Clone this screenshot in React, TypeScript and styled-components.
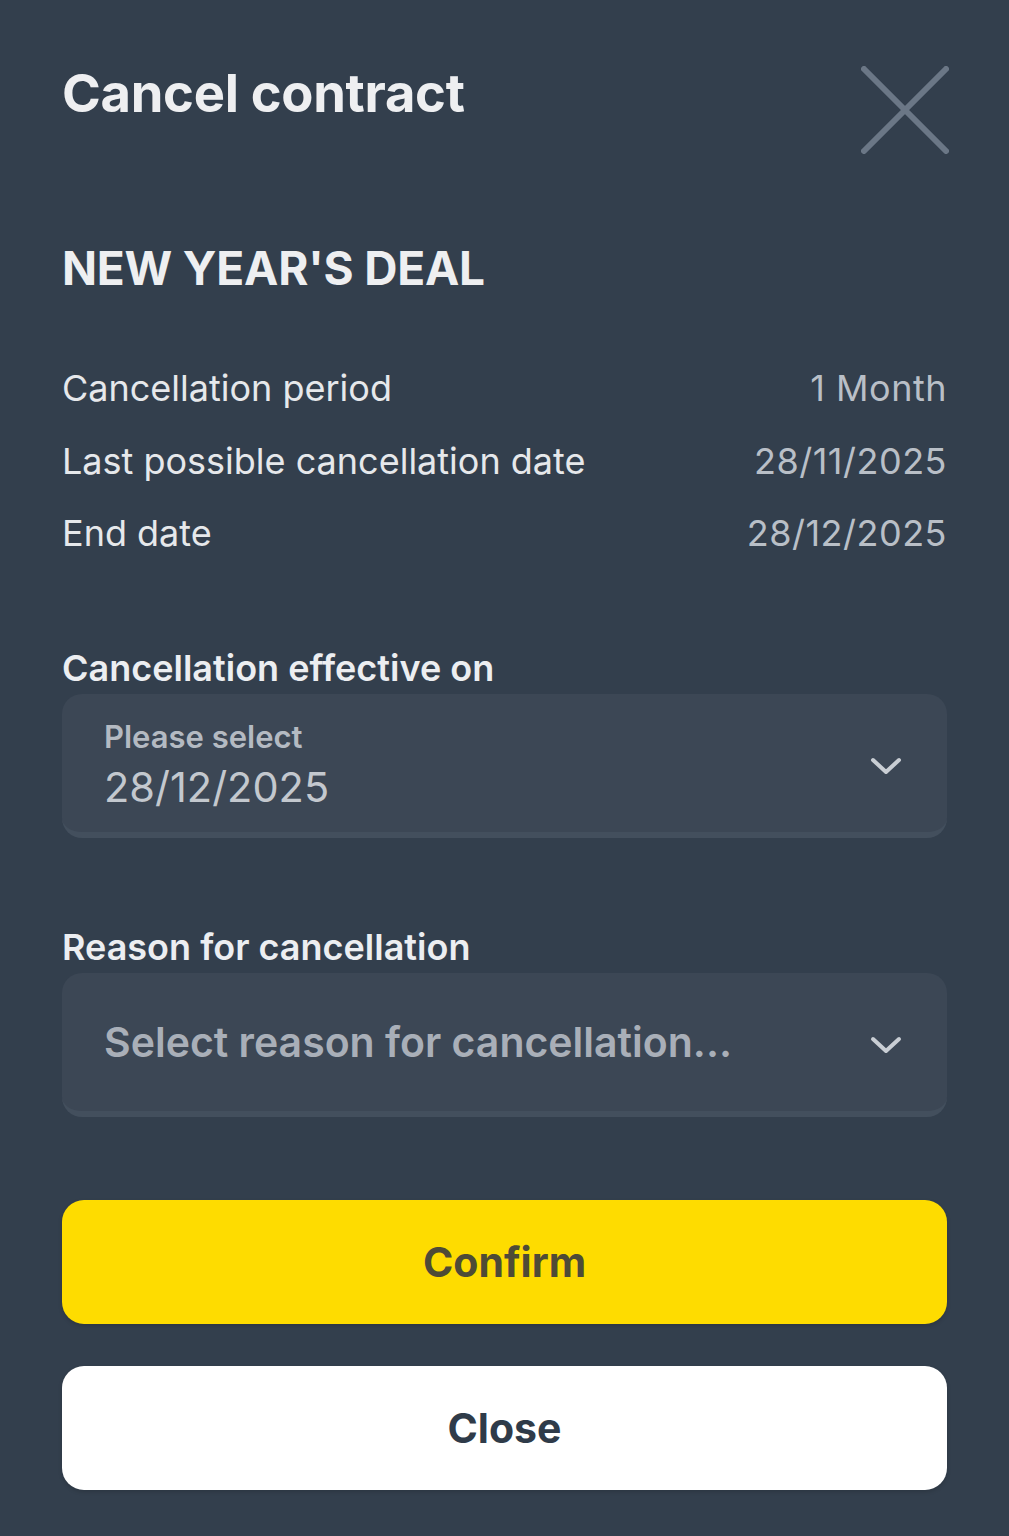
import styled, { createGlobalStyle } from "styled-components";

const GlobalStyle = createGlobalStyle`
  html, body {
    margin: 0;
    padding: 0;
    background: #333f4d;
  }
  body {
    font-family: Inter, "Noto Sans", sans-serif;
    -webkit-font-smoothing: antialiased;
  }
`;

const details = [
  { label: "Cancellation period", value: "1 Month" },
  { label: "Last possible cancellation date", value: "28/11/2025" },
  { label: "End date", value: "28/12/2025" },
];

const ChevronDown = () => (
  <Chevron width="34" height="22" viewBox="0 0 34 22" fill="none">
    <path
      d="M4 5l13 12L30 5"
      stroke="#c9ced4"
      strokeWidth="4"
      strokeLinecap="round"
      strokeLinejoin="round"
    />
  </Chevron>
);

const App = () => {
  return (
    <>
      <GlobalStyle />
      <Page>
        <Header>
          <Title>Cancel contract</Title>
          <CloseIcon aria-label="Close">
            <svg width="88" height="88" viewBox="0 0 88 88" fill="none">
              <path
                d="M3 3l82 82M85 3L3 85"
                stroke="#6b7786"
                strokeWidth="6"
                strokeLinecap="round"
              />
            </svg>
          </CloseIcon>
        </Header>

        <DealName>NEW YEAR'S DEAL</DealName>

        <DetailList>
          {details.map((d) => (
            <DetailRow key={d.label}>
              <DetailLabel>{d.label}</DetailLabel>
              <DetailValue>{d.value}</DetailValue>
            </DetailRow>
          ))}
        </DetailList>

        <FieldGroup $top={78}>
          <FieldLabel>Cancellation effective on</FieldLabel>
          <SelectBox>
            <SelectText>
              <SmallLabel>Please select</SmallLabel>
              <SelectedValue>28/12/2025</SelectedValue>
            </SelectText>
            <ChevronDown />
          </SelectBox>
        </FieldGroup>

        <FieldGroup $top={89}>
          <FieldLabel>Reason for cancellation</FieldLabel>
          <SelectBox>
            <Placeholder>Select reason for cancellation...</Placeholder>
            <ChevronDown />
          </SelectBox>
        </FieldGroup>

        <Actions>
          <Button $variant="primary">Confirm</Button>
          <Button $variant="secondary">Close</Button>
        </Actions>
      </Page>
    </>
  );
};

export default App;

const Page = styled.div`
  width: 1009px;
  min-height: 1536px;
  box-sizing: border-box;
  padding: 62px 62px 0 62px;
  background: #333f4d;
  color: #ebedf0;
`;

const Header = styled.div`
  display: flex;
  justify-content: space-between;
  align-items: flex-start;
`;

const Title = styled.h1`
  margin: 0;
  font-size: 52.5px;
  line-height: 62px;
  font-weight: 700;
  color: #eeeff1;
  letter-spacing: -0.3px;
`;

const CloseIcon = styled.div`
  margin-top: 4px;
  margin-right: -2px;
  width: 88px;
  height: 88px;
`;

const DealName = styled.h2`
  margin: 86px 0 0 0;
  font-size: 46px;
  line-height: 56px;
  font-weight: 700;
  color: #eeeff1;
  letter-spacing: -0.2px;
`;

const DetailList = styled.div`
  margin-top: 56px;
  display: flex;
  flex-direction: column;
`;

const DetailRow = styled.div`
  display: flex;
  justify-content: space-between;
  align-items: baseline;
  height: 72.5px;
  font-size: 36px;
  line-height: 72px;
`;

const DetailLabel = styled.span`
  color: #e6e8eb;
`;

const DetailValue = styled.span`
  color: #b9bfc7;
  letter-spacing: 0.5px;
`;

const FieldGroup = styled.div<{ $top: number }>`
  margin-top: ${({ $top }) => $top}px;
  display: flex;
  flex-direction: column;
`;

const FieldLabel = styled.div`
  font-size: 36px;
  line-height: 40px;
  font-weight: 600;
  color: #eceef1;
  margin-bottom: 6px;
`;

const SelectBox = styled.div`
  height: 144px;
  box-sizing: border-box;
  border-radius: 20px;
  background: #3c4755;
  border-bottom: 6px solid #434f5d;
  padding: 0 44px 0 42px;
  display: flex;
  align-items: center;
  justify-content: space-between;
`;

const Chevron = styled.svg`
  flex-shrink: 0;
  margin-top: 6px;
`;

const SelectText = styled.div`
  display: flex;
  flex-direction: column;
  gap: 8px;
  margin-top: 4px;
`;

const SmallLabel = styled.div`
  font-size: 31px;
  line-height: 36px;
  font-weight: 600;
  color: #b4bac2;
`;

const SelectedValue = styled.div`
  font-size: 41.5px;
  line-height: 48px;
  color: #c3c8ce;
`;

const Placeholder = styled.div`
  font-size: 41px;
  line-height: 48px;
  font-weight: 600;
  color: #a9afb8;
`;

const Actions = styled.div`
  margin-top: 83px;
  display: flex;
  flex-direction: column;
  gap: 42px;
`;

const Button = styled.button<{ $variant: "primary" | "secondary" }>`
  height: 124px;
  border: none;
  border-radius: 22px;
  font-family: Inter, "Noto Sans", sans-serif;
  font-size: 41px;
  font-weight: 700;
  background: ${({ $variant }) => ($variant === "primary" ? "#fedc00" : "#ffffff")};
  color: ${({ $variant }) => ($variant === "primary" ? "#4e4b36" : "#2f3b49")};
  box-shadow: 0 2px 4px rgba(0, 0, 0, 0.15);
  cursor: pointer;
`;
